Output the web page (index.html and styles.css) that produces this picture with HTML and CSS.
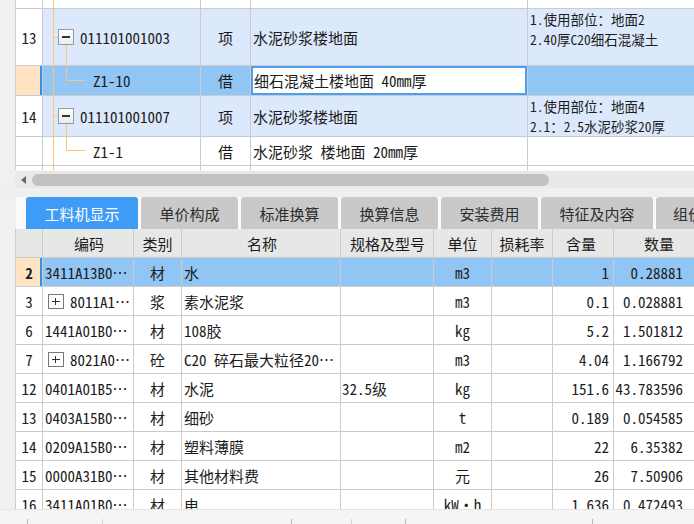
FILE: index.html
```html
<!DOCTYPE html>
<html lang="zh">
<head>
<meta charset="utf-8">
<title>工料机显示</title>
<link rel="stylesheet" href="styles.css">
</head>
<body>
<div class="app">
  <div class="top">
    <div class="grid top-grid">
      <div class="row r-top">
        <div class="cell c-num"></div>
        <div class="cell c-code tree"><i class="vline"></i></div>
        <div class="cell c-unit"></div>
        <div class="cell c-name"></div>
        <div class="cell c-feat"></div>
      </div>
      <div class="row r-13 hl">
        <div class="cell c-num">13</div>
        <div class="cell c-code tree"><i class="vline"></i><i class="stub"></i><span class="tbox minus"></span><span class="code">011101001003</span><i class="down"></i></div>
        <div class="cell c-unit">项</div>
        <div class="cell c-name">水泥砂浆楼地面</div>
        <div class="cell c-feat feat-a">1.使用部位：地面2<br>2.40厚C20细石混凝土</div>
      </div>
      <div class="row r-z110 sel">
        <div class="cell c-num"></div>
        <div class="cell c-code tree"><i class="vline"></i><i class="elbow"></i><span class="child">Z1-10</span></div>
        <div class="cell c-unit">借</div>
        <div class="cell c-name editor">细石混凝土楼地面 40mm厚</div>
        <div class="cell c-feat"></div>
      </div>
      <div class="row r-14 hl">
        <div class="cell c-num">14</div>
        <div class="cell c-code tree"><i class="vline"></i><i class="stub"></i><span class="tbox minus"></span><span class="code">011101001007</span><i class="down"></i></div>
        <div class="cell c-unit">项</div>
        <div class="cell c-name">水泥砂浆楼地面</div>
        <div class="cell c-feat feat-b">1.使用部位：地面4<br>2.1：2.5水泥砂浆20厚</div>
      </div>
      <div class="row r-z11">
        <div class="cell c-num"></div>
        <div class="cell c-code tree"><i class="vline"></i><i class="elbow"></i><span class="child">Z1-1</span></div>
        <div class="cell c-unit">借</div>
        <div class="cell c-name">水泥砂浆 楼地面 20mm厚</div>
        <div class="cell c-feat"></div>
      </div>
      <div class="row r-part">
        <div class="cell c-num"></div>
        <div class="cell c-code tree"><i class="vline"></i></div>
        <div class="cell c-unit"></div>
        <div class="cell c-name"></div>
        <div class="cell c-feat"></div>
      </div>
    </div>
    <div class="hscroll"><span class="arrow"></span><span class="thumb"></span></div>
  </div>

  <div class="band"></div>

  <div class="tabs">
    <div class="tab active w5">工料机显示</div>
    <div class="tab w4">单价构成</div>
    <div class="tab w4">标准换算</div>
    <div class="tab w4">换算信息</div>
    <div class="tab w4">安装费用</div>
    <div class="tab w5">特征及内容</div>
    <div class="tab last">组价方案</div>
  </div>

  <div class="grid bot-grid">
    <div class="row hdr">
      <div class="cell b-num"></div>
      <div class="cell b-code">编码</div>
      <div class="cell b-cat">类别</div>
      <div class="cell b-name">名称</div>
      <div class="cell b-spec">规格及型号</div>
      <div class="cell b-unit">单位</div>
      <div class="cell b-loss">损耗率</div>
      <div class="cell b-qty">含量</div>
      <div class="cell b-amt">数量</div>
    </div>
    <div class="row sel">
      <div class="cell b-num">2</div>
      <div class="cell b-code">3411A13B0…</div>
      <div class="cell b-cat">材</div>
      <div class="cell b-name">水</div>
      <div class="cell b-spec"></div>
      <div class="cell b-unit">m3</div>
      <div class="cell b-loss"></div>
      <div class="cell b-qty">1</div>
      <div class="cell b-amt">0.28881</div>
    </div>
    <div class="row">
      <div class="cell b-num">3</div>
      <div class="cell b-code"><span class="tbox plus"></span><span class="code">8011A1…</span></div>
      <div class="cell b-cat">浆</div>
      <div class="cell b-name">素水泥浆</div>
      <div class="cell b-spec"></div>
      <div class="cell b-unit">m3</div>
      <div class="cell b-loss"></div>
      <div class="cell b-qty">0.1</div>
      <div class="cell b-amt">0.028881</div>
    </div>
    <div class="row">
      <div class="cell b-num">6</div>
      <div class="cell b-code">1441A01B0…</div>
      <div class="cell b-cat">材</div>
      <div class="cell b-name">108胶</div>
      <div class="cell b-spec"></div>
      <div class="cell b-unit">kg</div>
      <div class="cell b-loss"></div>
      <div class="cell b-qty">5.2</div>
      <div class="cell b-amt">1.501812</div>
    </div>
    <div class="row">
      <div class="cell b-num">7</div>
      <div class="cell b-code"><span class="tbox plus"></span><span class="code">8021A0…</span></div>
      <div class="cell b-cat">砼</div>
      <div class="cell b-name">C20 碎石最大粒径20…</div>
      <div class="cell b-spec"></div>
      <div class="cell b-unit">m3</div>
      <div class="cell b-loss"></div>
      <div class="cell b-qty">4.04</div>
      <div class="cell b-amt">1.166792</div>
    </div>
    <div class="row">
      <div class="cell b-num">12</div>
      <div class="cell b-code">0401A01B5…</div>
      <div class="cell b-cat">材</div>
      <div class="cell b-name">水泥</div>
      <div class="cell b-spec">32.5级</div>
      <div class="cell b-unit">kg</div>
      <div class="cell b-loss"></div>
      <div class="cell b-qty">151.6</div>
      <div class="cell b-amt">43.783596</div>
    </div>
    <div class="row">
      <div class="cell b-num">13</div>
      <div class="cell b-code">0403A15B0…</div>
      <div class="cell b-cat">材</div>
      <div class="cell b-name">细砂</div>
      <div class="cell b-spec"></div>
      <div class="cell b-unit">t</div>
      <div class="cell b-loss"></div>
      <div class="cell b-qty">0.189</div>
      <div class="cell b-amt">0.054585</div>
    </div>
    <div class="row">
      <div class="cell b-num">14</div>
      <div class="cell b-code">0209A15B0…</div>
      <div class="cell b-cat">材</div>
      <div class="cell b-name">塑料薄膜</div>
      <div class="cell b-spec"></div>
      <div class="cell b-unit">m2</div>
      <div class="cell b-loss"></div>
      <div class="cell b-qty">22</div>
      <div class="cell b-amt">6.35382</div>
    </div>
    <div class="row">
      <div class="cell b-num">15</div>
      <div class="cell b-code">0000A31B0…</div>
      <div class="cell b-cat">材</div>
      <div class="cell b-name">其他材料费</div>
      <div class="cell b-spec"></div>
      <div class="cell b-unit">元</div>
      <div class="cell b-loss"></div>
      <div class="cell b-qty">26</div>
      <div class="cell b-amt">7.50906</div>
    </div>
    <div class="row">
      <div class="cell b-num">16</div>
      <div class="cell b-code">3411A01B0…</div>
      <div class="cell b-cat">材</div>
      <div class="cell b-name">电</div>
      <div class="cell b-spec"></div>
      <div class="cell b-unit">kW·h</div>
      <div class="cell b-loss"></div>
      <div class="cell b-qty">1.636</div>
      <div class="cell b-amt">0.472493</div>
    </div>
  </div>

  <div class="status">
    <span class="sep s1"></span>
    <span class="sep s2"></span>
    <span class="sep s3"></span>
    <span class="sep s4"></span>
    <span class="sep s5"></span>
    <span class="sep s6"></span>
  </div>
</div>
</body>
</html>
```

FILE: styles.css
```css
* { box-sizing: border-box; }

html, body {
  margin: 0;
  padding: 0;
}

body {
  width: 694px;
  height: 524px;
  overflow: hidden;
  background: #f0f0f0;
  font-family: "Noto Sans Mono CJK SC", "Noto Sans CJK SC", "Liberation Mono", monospace;
  font-size: 15px;
  color: #1c1c1c;
}

.app {
  height: 524px;
  display: flex;
  flex-direction: column;
}

/* ---------- grids ---------- */
.grid {
  background: #fff;
  border-left: 1px solid #cdcdcd;
  margin-left: 15px;
  overflow: hidden;
}

.row {
  display: flex;
  border-bottom: 1px solid #cbcbcb;
}

.cell {
  position: relative;
  display: flex;
  align-items: center;
  flex: none;
  border-right: 1px solid #cbcbcb;
  white-space: nowrap;
  overflow: hidden;
}

/* ---------- top grid ---------- */
.top {
  height: 188px;
  display: flex;
  flex-direction: column;
}

.top-grid {
  height: 170px;
  flex: none;
}

.c-num { width: 27px; justify-content: center; background: #fff; }
.c-code { width: 158px; }
.c-unit { width: 50px; justify-content: center; }
.c-name { width: 277px; padding-left: 2px; }
.c-feat { flex: 1; border-right: none; }

.r-top { height: 9px; }
.r-13 { height: 57px; }
.r-z110 { height: 30px; }
.r-14 { height: 41px; }
.r-z11 { height: 29px; }
.r-part { height: 20px; border-bottom: none; }

.hl .c-code, .hl .c-unit, .hl .c-name, .hl .c-feat { background: #dce8fb; }

.sel .cell { background: #91c6f4; }
.sel .c-num, .sel .b-num { background: #ffe3c3; box-shadow: inset -2px 0 0 #3a8ee6; }
.sel .b-num { font-weight: bold; }

.editor {
  background: #fff !important;
  box-shadow: inset 0 0 0 2px #48a0f2;
  padding-left: 3px;
}

.c-feat.feat-a,
.c-feat.feat-b {
  display: block;
  font-size: 13.5px;
  line-height: 20px;
  padding-left: 2px;
  padding-top: 0;
  white-space: nowrap;
}

/* tree */
.tree i { position: absolute; display: block; }
.tree .vline {
  left: 10px; top: 0; bottom: -1px; width: 1px;
  background: #ffc477;
}
.tree .stub {
  left: 10px; top: 50%; width: 5px; height: 1px;
  background: #ffc477;
}
.tree .down {
  left: 23px; top: calc(50% + 8px); bottom: -1px; width: 1px;
  background: #ffc477;
}
.tree .elbow {
  left: 23px; top: 0; height: 50%; width: 20px;
  border-left: 1px solid #ffc477;
  border-bottom: 1px solid #ffc477;
}

.tbox {
  position: relative;
  flex: none;
  display: inline-block;
  width: 16px;
  height: 16px;
  border: 1px solid #9a9a9a;
  background: linear-gradient(#ffffff, #ececec);
  margin-left: 15px;
}
.tbox::before {
  content: "";
  position: absolute;
  left: 3px; right: 3px; top: 6px;
  height: 2px;
  background: #333;
}
.tbox.plus {
  margin-left: 3px;
  height: 15px;
  border-color: #777;
  background: #fff;
}
.tbox.plus::before { left: 3px; right: 3px; top: 6px; height: 1px; }
.tbox.plus::after {
  content: "";
  position: absolute;
  top: 3px; bottom: 3px; left: 6px;
  width: 1px;
  background: #333;
}

.code { margin-left: 6px; }
.child { margin-left: 50px; }

/* scrollbar */
.hscroll {
  height: 18px;
  flex: none;
  margin-left: 15px;
  background: #e9e9e9;
  border-top: 1px solid #f6f6f6;
  display: flex;
  align-items: center;
  padding-left: 6px;
}
.arrow {
  width: 0; height: 0;
  border-top: 4px solid transparent;
  border-bottom: 4px solid transparent;
  border-right: 5px solid #6a6a6a;
}
.thumb {
  margin-left: 6px;
  width: 517px;
  height: 12px;
  border-radius: 6px;
  background: #c2c2c2;
}

.band {
  height: 9px;
  flex: none;
  background: #efefef;
}

/* ---------- tabs ---------- */
.tabs {
  height: 32px;
  flex: none;
  margin-left: 16px;
  padding-left: 10px;
  display: flex;
  gap: 3px;
  background: #fbfbfb;
  overflow: hidden;
}
.tab {
  flex: none;
  height: 32px;
  display: flex;
  align-items: center;
  justify-content: center;
  background: #c9c9c9;
  color: #2e2e2e;
  border-radius: 3px 3px 0 0;
  font-family: "Noto Sans CJK SC", sans-serif;
  font-size: 15px;
}
.tab.w5 { width: 112px; }
.tab.w4 { width: 97px; }
.tab.last { width: 100px; justify-content: flex-start; padding-left: 17px; }
.tab.active { background: #3e9bf6; color: #fff; }

/* ---------- bottom grid ---------- */
.bot-grid {
  height: 280px;
  flex: none;
}
.bot-grid .row { height: 29px; flex: none; }

.hdr .cell { background: #e7e7e7; justify-content: center; font-family: "Noto Sans CJK SC", sans-serif; }

.b-num { width: 27px; justify-content: center; }
.b-code { width: 91px; padding-left: 2px; }
.b-cat { width: 48px; justify-content: center; }
.b-name { width: 159px; padding-left: 2px; }
.b-spec { width: 93px; padding-left: 1px; }
.b-unit { width: 58px; justify-content: center; }
.b-loss { width: 61px; }
.b-qty { width: 61px; justify-content: flex-end; padding-right: 4px; }
.b-amt { flex: 1; justify-content: flex-end; padding-right: 11px; border-right: none; }
.hdr .b-amt { padding-right: 0; padding-left: 10px; }

/* ---------- status ---------- */
.status {
  flex: 1;
  position: relative;
  background: #f5f5f5;
  border-top: 1px solid #e4e4e4;
}
.sep {
  position: absolute;
  top: 9px;
  bottom: 0;
  width: 1px;
  background: #b8b8b8;
}
.s1 { left: 27px; }
.s2 { left: 102px; background: #d4d4d4; }
.s3 { left: 291px; }
.s4 { left: 351px; background: #d4d4d4; }
.s5 { left: 405px; }
.s6 { left: 592px; }
```
